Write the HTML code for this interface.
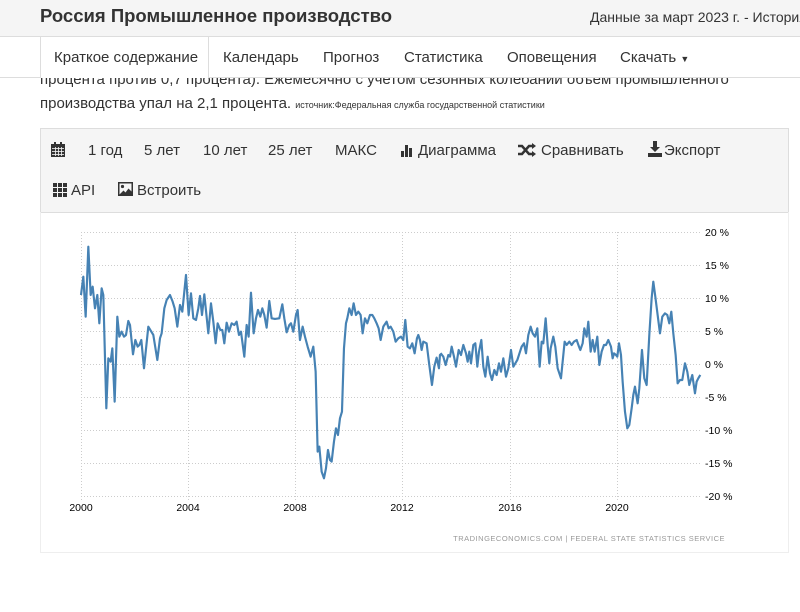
<!DOCTYPE html>
<html><head><meta charset="utf-8"><style>
*{margin:0;padding:0;box-sizing:border-box}
body{width:800px;height:612px;overflow:hidden;background:#fff;font-family:"Liberation Sans",sans-serif;color:#333;position:relative}
.hdr{position:absolute;left:0;top:0;width:800px;height:37px;background:#f5f5f5;border-bottom:1px solid #ddd}
.hdr .t{position:absolute;left:40px;top:5px;font-size:18.5px;font-weight:bold;color:#333}
.hdr .r{position:absolute;left:590px;top:9px;font-size:14px;white-space:nowrap;color:#333}
.para{position:absolute;left:40px;top:68px;font-size:15px;line-height:24px;width:760px;white-space:nowrap}
.para small{font-size:9px}
.nav{position:absolute;left:0;top:37px;width:800px;height:41px;background:#fff;border-bottom:1px solid #ddd}
.nav span{position:absolute;top:12px;font-size:15px}
.nav .act{position:absolute;left:40px;top:0;width:169px;height:41px;border-left:1px solid #ddd;border-right:1px solid #ddd;background:#fff}
.tb{position:absolute;left:40px;top:128px;width:749px;height:85px;background:#f5f5f5;border:1px solid #ddd}
.tb span{position:absolute;font-size:15px;white-space:nowrap}
.ch{position:absolute;left:40px;top:212px;width:749px;height:341px;border:1px solid #eee;border-top:none}
</style></head><body>
<div class="para">процента против 0,7 процента). Ежемесячно с учетом сезонных колебаний объем промышленного<br>производства упал на 2,1 процента. <small>источник:Федеральная служба государственной статистики</small></div>
<div class="hdr"><div class="t">Россия Промышленное производство</div><div class="r">Данные за март 2023 г. - История</div></div>
<div class="nav"><div class="act"></div>
<span style="left:54px">Краткое содержание</span><span style="left:223px">Календарь</span><span style="left:323px">Прогноз</span><span style="left:404px">Статистика</span><span style="left:507px">Оповещения</span><span style="left:620px">Скачать <span style="position:static;font-size:9px">▼</span></span></div>
<div class="tb">
<svg style="position:absolute;left:10px;top:13px" width="14" height="15" viewBox="0 0 14 15"><rect x="0" y="2" width="14" height="13" fill="#333"/><rect x="3" y="0" width="2" height="4" fill="#333"/><rect x="9" y="0" width="2" height="4" fill="#333"/><g fill="#f5f5f5"><rect x="1" y="6" width="12" height="0.8"/><rect x="1" y="9" width="12" height="0.8"/><rect x="1" y="12" width="12" height="0.8"/><rect x="4" y="5" width="0.8" height="9"/><rect x="7" y="5" width="0.8" height="9"/><rect x="10" y="5" width="0.8" height="9"/></g></svg>
<span style="left:47px;top:13px">1 год</span><span style="left:103px;top:13px">5 лет</span><span style="left:162px;top:13px">10 лет</span><span style="left:227px;top:13px">25 лет</span><span style="left:294px;top:13px">МАКС</span>
<svg style="position:absolute;left:360px;top:14px" width="14" height="14"><rect x="0" y="8" width="3" height="6" fill="#333"/><rect x="4" y="2" width="3" height="12" fill="#333"/><rect x="8" y="5" width="3" height="9" fill="#333"/></svg>
<span style="left:377px;top:13px">Диаграмма</span>
<svg style="position:absolute;left:477px;top:14px" width="18" height="14" viewBox="0 0 18 14"><path d="M0 3h4l7 8h4M0 11h4l7-8h4" stroke="#333" stroke-width="2.5" fill="none"/><path d="M14 0l4 3-4 3zM14 8l4 3-4 3z" fill="#333"/></svg>
<span style="left:500px;top:13px">Сравнивать</span>
<svg style="position:absolute;left:607px;top:12px" width="14" height="16"><path d="M5 0h4v6h3l-5 5-5-5h3z" fill="#333"/><rect x="0" y="12" width="14" height="4" fill="#333"/></svg>
<span style="left:623px;top:13px">Экспорт</span>
<svg style="position:absolute;left:12px;top:54px" width="14" height="14"><g fill="#333"><rect x="0" y="0" width="4" height="4"/><rect x="5" y="0" width="4" height="4"/><rect x="10" y="0" width="4" height="4"/><rect x="0" y="5" width="4" height="4"/><rect x="5" y="5" width="4" height="4"/><rect x="10" y="5" width="4" height="4"/><rect x="0" y="10" width="4" height="4"/><rect x="5" y="10" width="4" height="4"/><rect x="10" y="10" width="4" height="4"/></g></svg>
<span style="left:30px;top:53px">API</span>
<svg style="position:absolute;left:77px;top:53px" width="15" height="14"><rect x="0" y="0" width="15" height="14" fill="#333"/><rect x="1.5" y="1.5" width="12" height="11" fill="#f5f5f5"/><circle cx="4.5" cy="4.5" r="1.6" fill="#333"/><path d="M1.5 12.5l4-4 2 2 3-4 3 3v3z" fill="#333"/></svg>
<span style="left:96px;top:53px">Встроить</span>
</div>
<div class="ch"></div>
<svg style="position:absolute;left:0;top:0" width="800" height="612">
<g stroke="#ccc" stroke-width="1" stroke-dasharray="1,2" fill="none">
<path d="M81 232.5H700M81 265.5H700M81 298.5H700M81 331.5H700M81 364.5H700M81 397.5H700M81 430.5H700M81 463.5H700M81 496.5H700"/>
<path d="M81.5 232V500M188.5 232V500M295.5 232V500M402.5 232V500M510.5 232V500M617.5 232V500"/>
</g>
<g font-family="Liberation Sans, sans-serif" font-size="10.5" fill="#000">
<text x="705" y="236">20 %</text><text x="705" y="269">15 %</text><text x="705" y="302">10 %</text><text x="705" y="335">5 %</text><text x="705" y="368">0 %</text><text x="705" y="401">-5 %</text><text x="705" y="434">-10 %</text><text x="705" y="467">-15 %</text><text x="705" y="500">-20 %</text>
<g text-anchor="middle"><text x="81" y="511">2000</text><text x="188" y="511">2004</text><text x="295" y="511">2008</text><text x="402" y="511">2012</text><text x="510" y="511">2016</text><text x="617" y="511">2020</text></g>
</g>
<text x="725" y="541" text-anchor="end" font-family="Liberation Sans, sans-serif" font-size="7.5" fill="#999" letter-spacing="0.5">TRADINGECONOMICS.COM  |  FEDERAL STATE STATISTICS SERVICE</text>
<polyline transform="translate(40,215) scale(0.3333)" fill="none" stroke="#4682b4" stroke-width="6.5" stroke-linejoin="round" points="123,240 130,185 137,305 145,95 152,240 158,215 165,280 172,240 178,325 185,220 190,240 199,580 205,430 212,440 217,400 224,560 232,305 238,365 245,350 252,365 258,360 265,318 270,330 279,418 286,375 293,395 298,390 304,375 312,460 325,335 340,360 352,435 360,370 365,355 373,280 380,255 390,240 398,260 404,280 412,335 420,270 427,290 438,180 446,300 453,235 460,310 468,315 475,280 480,243 486,300 493,238 505,355 513,265 520,320 527,385 533,325 541,345 547,345 553,385 560,323 567,350 575,325 583,330 590,320 597,360 603,350 613,425 620,330 626,365 633,233 641,355 648,310 654,285 661,305 667,280 673,300 680,338 688,258 695,310 705,312 718,310 727,268 733,310 740,352 748,330 753,325 760,350 768,300 773,285 780,375 788,335 795,365 803,395 812,425 820,395 827,470 833,710 838,695 845,770 852,790 858,760 864,705 870,735 875,740 882,680 888,640 894,660 900,610 906,590 912,400 918,325 922,310 928,280 935,300 941,265 948,300 955,290 962,300 968,355 975,310 982,325 990,300 997,300 1003,310 1010,325 1016,340 1022,375 1030,335 1040,320 1046,340 1052,335 1060,350 1067,380 1075,370 1083,365 1090,375 1096,315 1103,395 1110,400 1117,385 1124,415 1131,370 1135,360 1140,375 1145,405 1150,380 1160,385 1168,450 1176,510 1183,455 1190,428 1197,460 1200,420 1206,415"/>
<polyline transform="translate(400,215) scale(0.3333)" fill="none" stroke="#4682b4" stroke-width="6.5" stroke-linejoin="round" points="122,415 130,425 137,450 145,420 150,425 155,395 162,425 168,455 176,405 183,420 190,390 198,415 203,440 208,410 213,445 220,390 226,385 232,455 237,410 244,375 250,455 256,485 263,425 270,475 276,495 283,465 290,480 297,445 303,470 310,430 318,485 325,460 333,405 340,455 346,445 352,435 360,410 365,395 372,385 378,415 385,360 392,335 398,355 405,365 412,340 419,455 425,380 430,385 437,310 443,390 448,445 452,400 460,365 466,395 473,460 483,490 490,420 494,380 500,390 508,380 515,390 522,380 530,375 537,395 541,405 548,385 553,340 560,365 565,320 572,410 578,375 584,410 592,365 598,450 605,410 612,390 618,390 625,375 633,395 638,430 642,415 648,420 652,425 657,385 663,420 668,500 675,590 682,640 688,630 695,580 700,540 705,515 713,565 718,520 726,405 733,490 740,510 748,360 755,250 760,200 766,245 773,300 780,355 787,305 795,295 802,300 808,325 814,290 820,355 827,420 833,505 840,495 847,495 855,445 862,470 868,510 877,480 885,535 890,500 895,490 901,480"/>
</svg>
</body></html>
